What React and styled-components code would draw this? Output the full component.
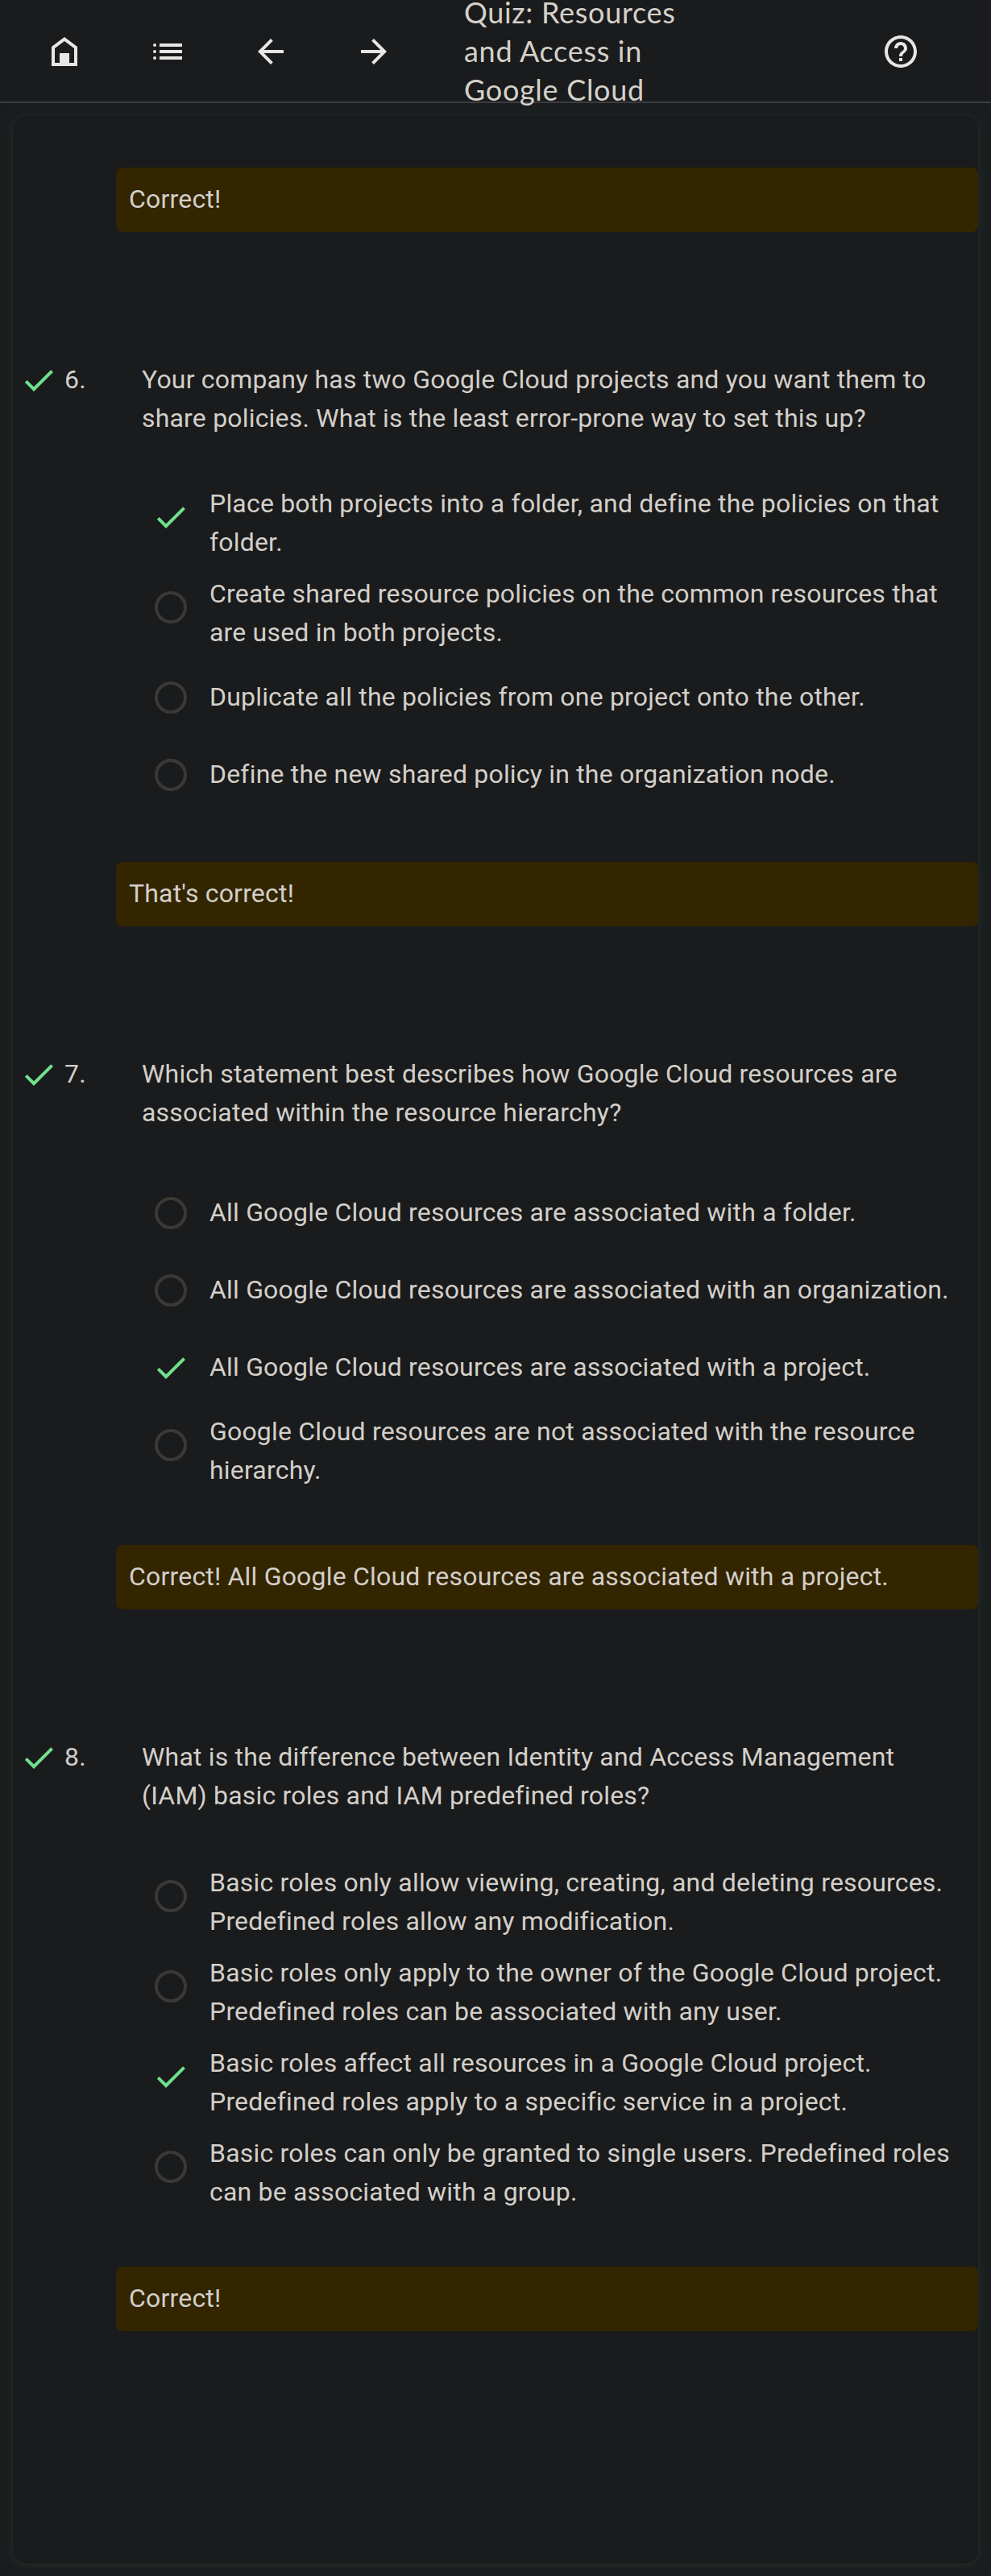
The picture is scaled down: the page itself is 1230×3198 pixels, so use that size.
import React from "react";
import styled, { createGlobalStyle } from "styled-components";

const GlobalStyle = createGlobalStyle`
  *, *::before, *::after { box-sizing: border-box; }
  body { margin: 0; background: #1a1b1c; }
`;

const Page = styled.div`
  height: 3198px;
  display: flex;
  flex-direction: column;
  overflow: hidden;
  background: #1a1c1d;
  color: #d3cfc9;
  font: 400 32px/48px Roboto, "Liberation Sans", sans-serif;
  letter-spacing: 0.19px;
`;

const TopBar = styled.header`
  position: relative;
  z-index: 1;
  height: 128px;
  flex: none;
  display: flex;
  align-items: center;
  padding: 0 64px 0 32px;
  background: #1a1b1c;
  box-shadow: inset 0 -2px #3b3d41;
`;

const IconButton = styled.button`
  width: 96px;
  height: 96px;
  flex: none;
  display: grid;
  place-items: center;
  margin: 0 ${(p) => p.$gap || 0}px 0 0;
  padding: 0;
  border: 0;
  border-radius: 50%;
  background: ${(p) => (p.$active ? "#191a1b" : "transparent")};
  color: #e8e6e3;
`;

const Icon = styled.svg`
  display: block;
  width: 48px;
  height: 48px;
  fill: currentColor;
`;

const Title = styled.h1`
  flex: 1;
  margin: 0 0 2px;
  color: #d5d1ca;
  font: 400 36px/48px Lato, sans-serif;
  letter-spacing: 0.7px;
`;

const Main = styled.main`
  flex: 1;
  display: flex;
  padding: 16px;
`;

const Card = styled.section`
  flex: 1;
  padding-top: 64px;
  border-radius: 16px;
  background: #1a1b1c;
  box-shadow: 0 2px 6px 2px rgba(48, 52, 52, 0.35), 0 2px 20px 12px #1c2121;
`;

const Feedback = styled.p`
  margin: 0 0 159px 128px;
  height: 80px;
  padding: 15px 16px;
  border-radius: 8px;
  background: #332500;
`;

const QuestionHead = styled.div`
  display: flex;
  margin-bottom: ${(p) => p.$gap}px;
`;

const Mark = styled.div`
  width: 48px;
  height: 48px;
  margin: 1px 0 0 8px;
`;

const CheckSvg = styled.svg`
  display: block;
  width: 48px;
  height: 48px;
  fill: #6fe08c;
`;

const Number = styled.div`
  width: 104px;
  padding-left: 8px;
`;

const Prompt = styled.div`
  white-space: pre-line;
`;

const Options = styled.div`
  margin: 0 0 60px 156px;
`;

const Option = styled.div`
  display: flex;
  min-height: 96px;
  padding: 8px 0;
`;

const Control = styled.div`
  width: 80px;
  height: 80px;
  flex: none;
  display: grid;
  place-items: center;
`;

const Radio = styled.span`
  width: 40px;
  height: 40px;
  border: 4px solid #3b3935;
  border-radius: 50%;
`;

const Label = styled.div`
  align-self: center;
  margin: -1px 0 1px;
  padding-left: 8px;
  white-space: pre-line;
`;

const Glyph = ({ d }) => (
  <Icon viewBox="0 0 24 24">
    <path d={d} />
  </Icon>
);

const Check = () => (
  <CheckSvg viewBox="0 0 24 24">
    <path d="M9 16.17 4.83 12l-1.42 1.41L9 19 21 7l-1.41-1.41z" />
  </CheckSvg>
);

const questions = [
  {
    n: 6,
    gap: 51,
    text: "Your company has two Google Cloud projects and you want them to\nshare policies. What is the least error-prone way to set this up?",
    answer: 0,
    options: [
      "Place both projects into a folder, and define the policies on that\nfolder.",
      "Create shared resource policies on the common resources that\nare used in both projects.",
      "Duplicate all the policies from one project onto the other.",
      "Define the new shared policy in the organization node.",
    ],
    feedback: "That's correct!",
  },
  {
    n: 7,
    gap: 53,
    text: "Which statement best describes how Google Cloud resources are\nassociated within the resource hierarchy?",
    answer: 2,
    options: [
      "All Google Cloud resources are associated with a folder.",
      "All Google Cloud resources are associated with an organization.",
      "All Google Cloud resources are associated with a project.",
      "Google Cloud resources are not associated with the resource\nhierarchy.",
    ],
    feedback: "Correct! All Google Cloud resources are associated with a project.",
  },
  {
    n: 8,
    gap: 53,
    text: "What is the difference between Identity and Access Management\n(IAM) basic roles and IAM predefined roles?",
    answer: 2,
    options: [
      "Basic roles only allow viewing, creating, and deleting resources.\nPredefined roles allow any modification.",
      "Basic roles only apply to the owner of the Google Cloud project.\nPredefined roles can be associated with any user.",
      "Basic roles affect all resources in a Google Cloud project.\nPredefined roles apply to a specific service in a project.",
      "Basic roles can only be granted to single users. Predefined roles\ncan be associated with a group.",
    ],
    feedback: "Correct!",
  },
];

export default function App() {
  return (
    <Page>
      <GlobalStyle />
      <TopBar>
        <IconButton $gap={32} aria-label="Home">
          <Glyph d="M12 3 4 9v12h16V9zm6 16h-3v-6H9v6H6v-9l6-4.5 6 4.5z" />
        </IconButton>
        <IconButton $gap={32} $active aria-label="Contents">
          <Glyph d="M3 8a1 1 0 1 0 2 0 1 1 0 1 0-2 0zm0 4a1 1 0 1 0 2 0 1 1 0 1 0-2 0zm0 4a1 1 0 1 0 2 0 1 1 0 1 0-2 0zM7 7v2h14V7zm0 6h14v-2H7zm0 4h14v-2H7z" />
        </IconButton>
        <IconButton $gap={32} aria-label="Back">
          <Glyph d="M20 11H7.83l5.59-5.59L12 4l-8 8 8 8 1.41-1.41L7.83 13H20z" />
        </IconButton>
        <IconButton $gap={64} aria-label="Forward">
          <Glyph d="m12 4-1.41 1.41L16.17 11H4v2h12.17l-5.58 5.59L12 20l8-8z" />
        </IconButton>
        <Title>
          Quiz: Resources
          <br />
          and Access in
          <br />
          Google Cloud
        </Title>
        <IconButton aria-label="Help">
          <Glyph d="M11 18h2v-2h-2zm1-16C6.48 2 2 6.48 2 12s4.48 10 10 10 10-4.48 10-10S17.52 2 12 2m0 18c-4.41 0-8-3.59-8-8s3.59-8 8-8 8 3.59 8 8-3.59 8-8 8m0-14c-2.21 0-4 1.79-4 4h2c0-1.1.9-2 2-2s2 .9 2 2c0 2-3 1.75-3 5h2c0-2.25 3-2.5 3-5 0-2.21-1.79-4-4-4" />
        </IconButton>
      </TopBar>
      <Main>
        <Card>
          <Feedback>Correct!</Feedback>
          {questions.map((q) => (
            <React.Fragment key={q.n}>
              <QuestionHead $gap={q.gap}>
                <Mark>
                  <Check />
                </Mark>
                <Number>{q.n}.</Number>
                <Prompt>{q.text}</Prompt>
              </QuestionHead>
              <Options>
                {q.options.map((o, i) => (
                  <Option key={o}>
                    <Control>{i === q.answer ? <Check /> : <Radio />}</Control>
                    <Label>{o}</Label>
                  </Option>
                ))}
              </Options>
              <Feedback>{q.feedback}</Feedback>
            </React.Fragment>
          ))}
        </Card>
      </Main>
    </Page>
  );
}
